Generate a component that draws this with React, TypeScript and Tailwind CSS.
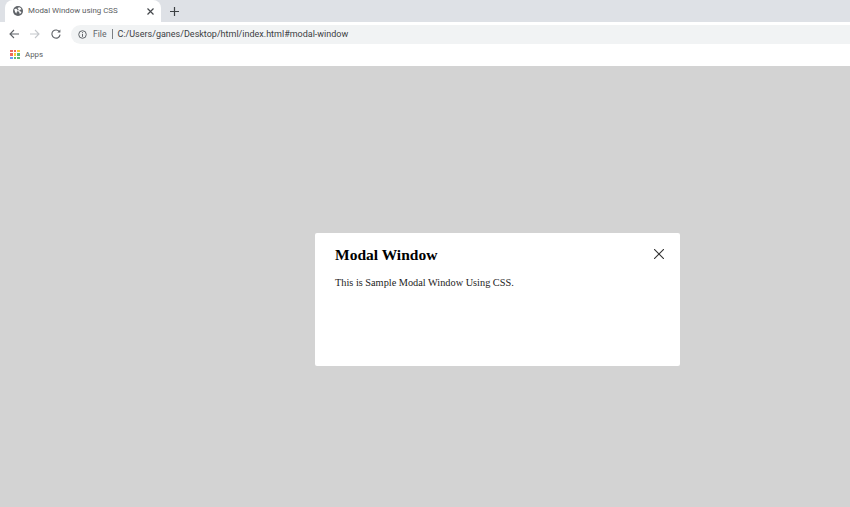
import React from "react";

const AppsIcon = () => {
  const colors = ["#ea4335", "#ea4335", "#fbbc05", "#ea4335", "#fbbc05", "#34a853", "#4285f4", "#34a853", "#34a853"];
  return (
    <div className="grid grid-cols-3 gap-[1px] w-[10px] h-[10px]">
      {colors.map((c, i) => (
        <div key={i} className="w-[2.6px] h-[2.6px] opacity-80" style={{ backgroundColor: c }} />
      ))}
    </div>
  );
};

const GlobeIcon = () => (
  <svg width="10" height="10" viewBox="0 0 16 16">
    <circle cx="8" cy="8" r="8" fill="#5f6368" />
    <path d="M2 5l3-1 2 2 1 2-2 1-.5 3-2-2zM10 2l2.5 1 1 2.5-2.5.5-1 2 3 1 .5 1-2.5 3-1-3-2-2 1-3-2-2z" fill="#fff" />
  </svg>
);

const ArrowIcon = ({ dir, color }: { dir: "left" | "right"; color: string }) => (
  <svg width="10" height="10" viewBox="0 0 10 10" fill="none" stroke={color} strokeWidth="1.1">
    {dir === "left" ? <path d="M10 5H1M5 1L1 5l4 4" /> : <path d="M0 5h9M5 1l4 4-4 4" />}
  </svg>
);

const ReloadIcon = () => (
  <svg width="10" height="10" viewBox="0 0 10 10" fill="none" stroke="#5f6368" strokeWidth="1.1">
    <path d="M8.6 3A4.1 4.1 0 1 0 9.1 5.6" />
    <path d="M9.4 0.4V3.4H6.4" fill="#5f6368" stroke="none" />
  </svg>
);

const InfoIcon = () => (
  <svg width="9" height="9" viewBox="0 0 10 10" fill="none" stroke="#5f6368">
    <circle cx="5" cy="5" r="4.2" strokeWidth="1.1" />
    <path d="M5 4.4V7.6M5 2.4V3.5" strokeWidth="1.1" />
  </svg>
);

const App: React.FC = () => {
  return (
    <div className="h-[507px] w-[850px] overflow-hidden flex flex-col bg-[#d3d3d3] font-['Liberation_Serif',serif]">
      {/* Browser chrome */}
      <div className="h-[66px] flex flex-col bg-white font-['Roboto','Noto_Sans',sans-serif] shrink-0">
        <div className="h-[22px] bg-[#dee1e6] flex items-end pl-[5px]">
          <div className="w-[156px] h-[22px] bg-white rounded-t-lg flex items-center pl-[8px] pr-[7px]">
            <GlobeIcon />
            <span className="ml-[5px] text-[7.9px] text-[#5a5d61] whitespace-nowrap">Modal Window using CSS</span>
            <span className="ml-auto text-[#45484c]">
              <svg width="7" height="7" viewBox="0 0 7 7" stroke="currentColor" strokeWidth="1.2">
                <path d="M0.5 0.5l6 6M6.5 0.5l-6 6" />
              </svg>
            </span>
          </div>
          <div className="h-[22px] flex items-center ml-[9px]">
            <svg width="9" height="9" viewBox="0 0 9 9" stroke="#3c4043" strokeWidth="1.2">
              <path d="M4.5 0v9M0 4.5h9" />
            </svg>
          </div>
        </div>
        <div className="h-[23px] flex items-center pl-[9px] pt-[1px]">
          <ArrowIcon dir="left" color="#5f6368" />
          <div className="ml-[11px]">
            <ArrowIcon dir="right" color="#c4c7cb" />
          </div>
          <div className="ml-[11px]">
            <ReloadIcon />
          </div>
          <div className="ml-[10px] flex-1 h-[19px] bg-[#f1f3f4] rounded-l-full flex items-center pl-[7px] text-[9px] leading-[12px]">
            <InfoIcon />
            <span className="ml-[6px] text-[8.6px] text-[#5f6368]">File</span>
            <span className="ml-[5px] w-px h-[10px] bg-[#7c7f83]" />
            <span className="ml-[5px] text-[#3c4043] whitespace-nowrap">
              C:/Users/ganes/Desktop/html/index.html#modal-window
            </span>
          </div>
        </div>
        <div className="flex-1 flex items-center pl-[10px] pb-[2px]">
          <AppsIcon />
          <span className="ml-[5px] text-[7.9px] text-[#5a5d61]">Apps</span>
        </div>
      </div>

      {/* Page */}
      <div className="flex-1 relative">
        <div className="absolute left-[315px] top-[167px] w-[365px] h-[133px] bg-white rounded-[2px] pl-[20px] pt-[12px]">
          <h1 className="text-[15.5px] leading-[19px] font-bold text-black">Modal Window</h1>
          <p className="mt-[12px] text-[10.3px] leading-[14px] text-[#1c1c1c]">This is Sample Modal Window Using CSS.</p>
          <svg className="absolute left-[339px] top-[16px]" width="10" height="10" viewBox="0 0 10 10" stroke="#333" strokeWidth="1.1">
            <path d="M0 0l10 10M10 0L0 10" />
          </svg>
        </div>
      </div>
    </div>
  );
};

export default App;
